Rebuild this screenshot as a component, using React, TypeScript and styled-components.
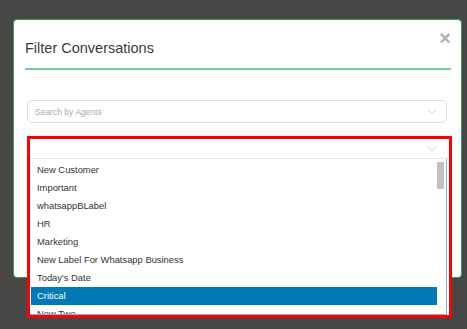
import * as React from "react";
import styled, {createGlobalStyle} from "styled-components";

const GlobalStyle = createGlobalStyle`
  html, body {
    margin: 0;
    padding: 0;
    background: #474745;
    font-family: "Liberation Sans", Arial, sans-serif;
  }
`;

const labels = [
  "New Customer",
  "Important",
  "whatsappBLabel",
  "HR",
  "Marketing",
  "New Label For Whatsapp Business",
  "Today's Date",
  "Critical",
  "New Two",
];

const Backdrop = styled.div`
  width: 467px;
  height: 329px;
  padding: 19px 0 0 13px;
  box-sizing: border-box;
  overflow: hidden;
`;

const Modal = styled.div`
  position: relative;
  width: 449px;
  height: 259px;
  box-sizing: border-box;
  background: #fff;
  border: 1px solid #2f9e55;
  border-radius: 4px;
`;

const Header = styled.div`
  margin: 0 10px 0 11px;
  padding-top: 18px;
  padding-bottom: 10px;
  border-bottom: 2px solid #6ccf95;
`;

const Title = styled.h2`
  margin: 0;
  font-size: 14.5px;
  line-height: 20px;
  font-weight: 400;
  color: #3a3a3a;
`;

const CloseButton = styled.span`
  position: absolute;
  top: 8px;
  right: 10px;
  font-size: 20px;
  font-weight: 700;
  line-height: 20px;
  color: #b0b0b0;
  cursor: pointer;
`;

const Body = styled.div`
  display: flex;
  flex-direction: column;
  gap: 13px;
  padding: 30px 14px 0 13px;
`;

const SearchBox = styled.div`
  height: 23px;
  box-sizing: border-box;
  display: flex;
  align-items: center;
  justify-content: space-between;
  padding: 0 9px 0 7px;
  border: 1px solid #dcdcdc;
  border-radius: 5px;
  font-size: 8.5px;
  color: #ababab;
`;

const Chevron = () => (
  <svg width="10" height="6" viewBox="0 0 10 6">
    <path d="M0.5 0.5 L5 5 L9.5 0.5" fill="none" stroke="#cfcfcf" strokeWidth="1" />
  </svg>
);

const SelectWrap = styled.div`
  margin-right: -5px;
  border: 3px solid #ff0000;
  display: flex;
  flex-direction: column;
  background: #fff;
`;

const Control = styled.div`
  height: 20px;
  box-sizing: border-box;
  display: flex;
  align-items: center;
  justify-content: flex-end;
  padding-right: 12px;
  border-bottom: 1px solid #e6e6e6;
`;

const Menu = styled.div`
  position: relative;
  height: 156px;
  margin-right: 2px;
  box-sizing: border-box;
  overflow: hidden;
  border-right: 1px solid #7fb3dc;
  border-bottom: 1px solid #7fb3dc;
`;

const OptionList = styled.ul`
  list-style: none;
  margin: 0;
  padding: 2px 9px 0 1px;
`;

const ScrollThumb = styled.div`
  position: absolute;
  top: 3px;
  right: 2px;
  width: 7px;
  height: 27px;
  background: #c1c1c1;
`;

const Option = styled.li<{$active?: boolean}>`
  height: 18px;
  line-height: 18px;
  padding-left: 6px;
  font-size: 9.4px;
  white-space: nowrap;
  color: ${({$active}) => ($active ? "#fff" : "#333")};
  background: ${({$active}) => ($active ? "#0279b4" : "transparent")};
`;

export default function App() {
  return (
    <>
      <GlobalStyle />
      <Backdrop>
        <Modal>
          <CloseButton>×</CloseButton>
          <Header>
            <Title>Filter Conversations</Title>
          </Header>
          <Body>
            <SearchBox>
              <span>Search by Agents</span>
              <Chevron />
            </SearchBox>
            <SelectWrap>
              <Control>
                <Chevron />
              </Control>
              <Menu>
                <OptionList>
                  {labels.map(label => (
                    <Option key={label} $active={label === "Critical"}>
                      {label}
                    </Option>
                  ))}
                </OptionList>
                <ScrollThumb />
              </Menu>
            </SelectWrap>
          </Body>
        </Modal>
      </Backdrop>
    </>
  );
}
